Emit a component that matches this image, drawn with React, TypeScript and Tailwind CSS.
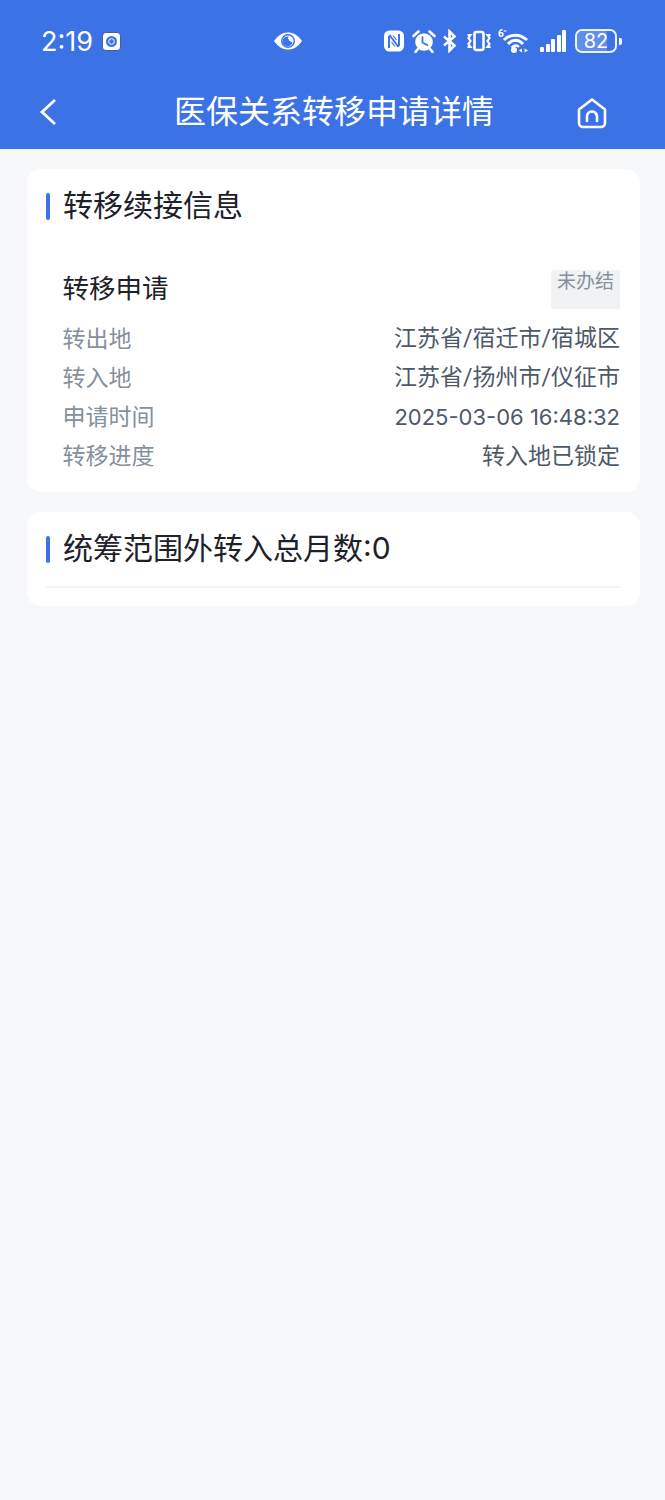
const fontStack = "font-['Inter','Noto_Sans_CJK_SC',sans-serif]";

const rows = [
  { label: "转出地", value: "江苏省/宿迁市/宿城区", valueClass: "text-[23px] font-['Roboto','Noto_Sans_CJK_SC',sans-serif]" },
  { label: "转入地", value: "江苏省/扬州市/仪征市", valueClass: "text-[23px] font-['Roboto','Noto_Sans_CJK_SC',sans-serif]" },
  { label: "申请时间", value: "2025-03-06 16:48:32", valueClass: "text-[22px]" },
  { label: "转移进度", value: "转入地已锁定", valueClass: "text-[23px]" },
];

function StatusBar() {
  return (
    <div className="h-[82px] pl-[41px] pr-[43px] flex items-center justify-between text-white">
      <div className="flex items-center w-[90px] gap-[9px]">
        <span className="text-[27px] leading-none">2:19</span>
        <svg width="19" height="19" viewBox="0 0 19 19">
          <rect x="0.5" y="0.5" width="18" height="18" rx="3.5" fill="#fff" stroke="#1f3a70" strokeWidth="0.7" />
          <circle cx="9.5" cy="9.5" r="5.5" fill="#3b74e6" />
          <circle cx="9.5" cy="9.5" r="2.8" fill="none" stroke="#fff" strokeWidth="1" />
        </svg>
      </div>
      <svg className="ml-[60px]" width="30" height="20" viewBox="0 0 30 20">
        <path d="M1 10C5 4 10 1.500 15 1.500S25 4 29 10C25 16 20 18.500 15 18.500S5 16 1 10Z" fill="#fff" />
        <circle cx="15" cy="10" r="7" fill="#3b74e6" />
        <circle cx="15" cy="10" r="5.500" fill="#fff" />
        <path d="M15.500 5.500A5 5 0 1 0 19.500 11 4 4 0 0 1 15.500 5.500Z" fill="#3b74e6" />
      </svg>
      <div className="flex items-center">
        {/* nfc */}
        <svg width="20" height="22" viewBox="0 0 20 22">
          <rect x="0" y="0.500" width="20" height="21" rx="5.500" fill="#fff" />
          <path d="M5 18V6M15 16V4M5.500 5 14.500 17" fill="none" stroke="#3b74e6" strokeWidth="2" />
          <path d="M9 5.500 12.500 10M7.500 12 11 16.500" fill="none" stroke="#3b74e6" strokeWidth="1.200" />
        </svg>
        {/* alarm */}
        <svg className="ml-[8px]" width="24" height="24" viewBox="0 0 24 24">
          <circle cx="12" cy="13" r="8.800" fill="#fff" />
          <path d="M1.500 7 6.500 2.500M22.500 7 17.500 2.500M5.500 20.500 3.500 23M18.500 20.500 20.500 23" stroke="#fff" strokeWidth="2.600" strokeLinecap="round" />
          <path d="M10.500 7.500V13.500L16 16.500" fill="none" stroke="#3b74e6" strokeWidth="1.800" />
        </svg>
        {/* bluetooth */}
        <svg className="ml-[6px]" width="15" height="24" viewBox="0 0 15 24">
          <path d="M2 7.500 12.500 16.500 7.500 21.500V2.500L12.500 7.500 2 16.500" fill="none" stroke="#fff" strokeWidth="2.600" />
        </svg>
        {/* vibrate */}
        <svg className="ml-[10px]" width="24" height="22" viewBox="0 0 24 22">
          <rect x="7.500" y="2" width="9" height="18" rx="2" fill="none" stroke="#fff" strokeWidth="2.600" />
          <path d="M0.500 5H3.500L1.500 8 3.500 11 1.500 14 3.500 17H0.500M23.500 5H20.500L22.500 8 20.500 11 22.500 14 20.500 17H23.500" fill="none" stroke="#fff" strokeWidth="2.200" />
        </svg>
        {/* wifi */}
        <svg className="ml-[7px]" width="30" height="24" viewBox="0 0 30 24">
          <text x="0" y="8" fontSize="10" fontWeight="700" fill="#fff" fontFamily="Roboto, sans-serif">6</text>
          <path d="M7 2.500V1M5.500 2h3" stroke="#fff" strokeWidth="0.800" />
          <path d="M6 11C12 4.500 22 4.500 29 11M10 15C14.500 10 20.500 10 25 15" fill="none" stroke="#fff" strokeWidth="3" />
          <path d="M13.500 18.500C16 16 19 16 21 18" fill="none" stroke="#fff" strokeWidth="2.400" />
          <circle cx="16" cy="21" r="3" fill="#fff" />
          <path d="M21 21.500 24 19.500V23.500ZM30 21.500 26.500 19.500V23.500Z" fill="#fff" />
        </svg>
        {/* signal */}
        <div className="ml-[12px] flex items-end gap-[1.500px] h-[22px]">
          <div className="w-[4px] h-[5px] rounded-[1px] bg-white" />
          <div className="w-[4px] h-[8px] rounded-[1px] bg-white" />
          <div className="w-[4px] h-[13px] rounded-[1px] bg-white" />
          <div className="w-[4px] h-[17px] rounded-[1px] bg-white" />
          <div className="w-[4px] h-[22px] rounded-[1px] bg-white" />
        </div>
        {/* battery */}
        <div className="ml-[9px] flex items-center gap-[2px]">
          <div className="w-[42px] h-[24px] rounded-[7px] border-[2px] border-white/90 flex items-center justify-center text-[20px] leading-none relative overflow-hidden">
            <div className="absolute inset-y-0 left-0 w-[80%] bg-white/20" />
            <span className="relative">82</span>
          </div>
          <div className="w-[3px] h-[7px] rounded-r-[2px] bg-white" />
        </div>
      </div>
    </div>
  );
}

function NavBar() {
  return (
    <div className="h-[67px] pl-[38px] pr-[35px] pb-[7px] grid grid-cols-[1fr_auto_1fr] items-center text-white">
      <svg width="20" height="28" viewBox="0 0 20 28">
        <path d="M17 2 4 14 17 26" fill="none" stroke="#fff" strokeWidth="2.800" />
      </svg>
      <h1 className="text-[32px] leading-none">医保关系转移申请详情</h1>
      <svg className="justify-self-end mr-[22px] mt-[2px]" width="32" height="32" viewBox="0 0 32 32">
        <path d="M3 12.500 16 2.500 29 12.500V26A4 4 0 0 1 25 30H7A4 4 0 0 1 3 26Z" fill="none" stroke="#fff" strokeWidth="2.600" strokeLinejoin="round" />
        <path d="M11 24V19.500A5 5 0 0 1 21 19.500V24" fill="none" stroke="#fff" strokeWidth="2.600" strokeLinecap="round" />
      </svg>
    </div>
  );
}

function SectionTitle({ children }: { children: string }) {
  return (
    <div className="flex items-center gap-[13px]">
      <div className="w-[4px] h-[27px] rounded-[2px] bg-[#3b74e6]" />
      <h2 className="text-[30px] leading-[40px] text-[#1d2129] -mt-[1px] mb-[1px]">{children}</h2>
    </div>
  );
}

export default function App() {
  return (
    <div className={`${fontStack} w-[665px] h-[1500px] bg-[#f7f8fa] flex flex-col`}>
      <div className="bg-[#3b72e6]">
        <StatusBar />
        <NavBar />
      </div>

      <div className="pl-[27px] pr-[25px] pt-[20px] flex flex-col gap-[20px]">
        {/* transfer info */}
        <section className="bg-white rounded-[14px] pl-[19px] pr-[20px] pt-[17px] pb-[19px]">
          <SectionTitle>转移续接信息</SectionTitle>

          <div className="pl-[17px] pt-[44px]">
            <div className="flex justify-between items-start h-[39px]">
              <h3 className="text-[26.5px] leading-[37px] -ml-[0.5px] text-[#1d2129]">转移申请</h3>
              <span className="w-[69px] h-[39px] rounded-[2px] bg-[#f1f2f4] text-center text-[19px] leading-[24px] text-[#86909c]">
                未办结
              </span>
            </div>
            <div className="mt-[13px] flex flex-col gap-[5px]">
              {rows.map((row) => (
                <div key={row.label} className="flex justify-between items-center h-[34px]">
                  <span className="text-[23px] text-[#86909c] -ml-[0.5px]">{row.label}</span>
                  <span className={`${row.valueClass} text-[#4e5969]`}>{row.value}</span>
                </div>
              ))}
            </div>
          </div>
        </section>

        {/* out of area months */}
        <section className="bg-white rounded-[14px] pl-[19px] pr-[20px] pt-[17px] pb-[18px]">
          <SectionTitle>统筹范围外转入总月数:0</SectionTitle>
          <div className="mt-[17px] h-[2px] bg-[#f3f4f6]" />
        </section>
      </div>
    </div>
  );
}
